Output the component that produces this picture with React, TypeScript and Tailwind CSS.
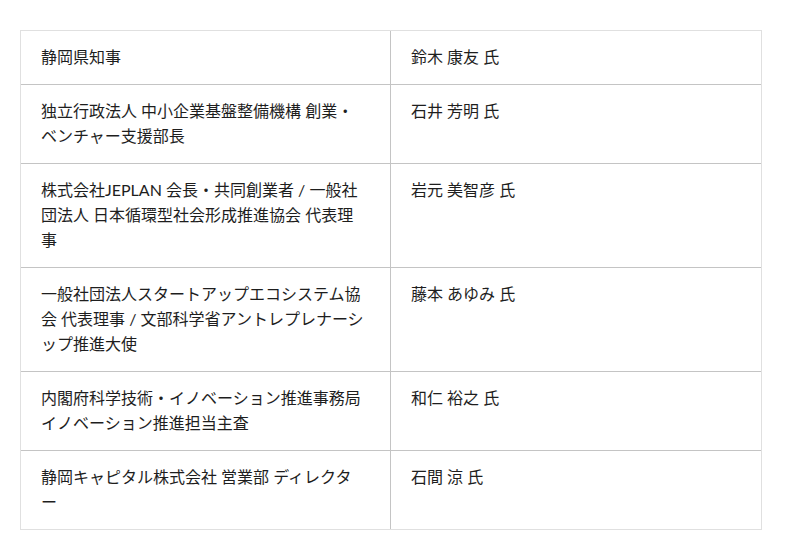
import React from "react";

const rows: [string, string][] = [
  ["静岡県知事", "鈴木 康友 氏"],
  ["独立行政法人 中小企業基盤整備機構 創業・ベンチャー支援部長", "石井 芳明 氏"],
  ["株式会社JEPLAN 会長・共同創業者 / 一般社団法人 日本循環型社会形成推進協会 代表理事", "岩元 美智彦 氏"],
  ["一般社団法人スタートアップエコシステム協会 代表理事 / 文部科学省アントレプレナーシップ推進大使", "藤本 あゆみ 氏"],
  ["内閣府科学技術・イノベーション推進事務局 イノベーション推進担当主査", "和仁 裕之 氏"],
  ["静岡キャピタル株式会社 営業部 ディレクター", "石間 涼 氏"],
];

export default function App() {
  return (
    <div
      className="w-[800px] h-[560px] bg-white pt-[30px] pl-5 text-[16px] leading-[25px] text-[#1e1e1e]"
      style={{ fontFamily: 'Lato, "Noto Sans CJK JP", sans-serif' }}
    >
      <div className="w-[742px] border border-[#e0e0e0]">
        {rows.map(([a, b], i) => (
          <div key={i} className={`flex ${i > 0 ? "border-t border-[#c4c4c4]" : ""}`}>
            <div className="w-[370px] shrink-0 border-r border-[#c4c4c4] pl-5 pr-[25px] pt-[13px] pb-[15px]">{a}</div>
            <div className="flex-1 pl-5 pr-[25px] pt-[13px] pb-[15px]">{b}</div>
          </div>
        ))}
      </div>
    </div>
  );
}
